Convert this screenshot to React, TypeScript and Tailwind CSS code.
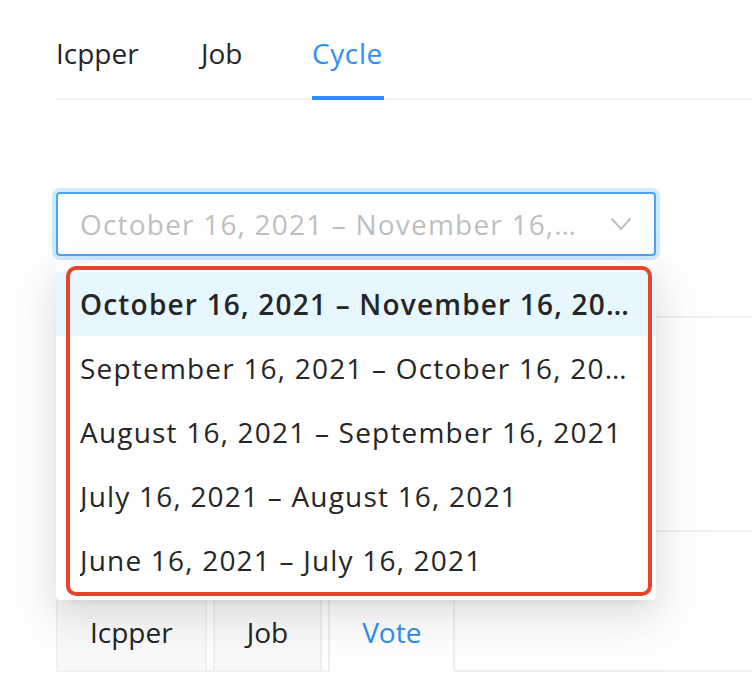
import React from 'react';

const cycles: string[] = [
  'October 16, 2021 – November 16, 2021',
  'September 16, 2021 – October 16, 2021',
  'August 16, 2021 – September 16, 2021',
  'July 16, 2021 – August 16, 2021',
  'June 16, 2021 – July 16, 2021',
];

const topTabs = [
  { name: 'Icpper', cls: 'w-[83px]' },
  { name: 'Job', cls: 'w-[46px] ml-[62px]' },
  { name: 'Cycle', cls: 'w-[72px] ml-[65px] text-[#2f8ef3] tracking-[0.6px]' },
];

const App: React.FC = () => {
  return (
    <div className="relative w-[752px] h-[674px] overflow-hidden bg-white text-[#262626] font-['Open_Sans',sans-serif]">
      <div className="pl-[56px]">
        {/* top tabs */}
        <div className="flex pt-[7px] border-b-2 border-[#f0f0f0]">
          {topTabs.map((t) => (
            <div
              key={t.name}
              className={`relative pt-[24px] pb-[23px] text-[28px] leading-[44px] whitespace-nowrap ${t.cls}`}
            >
              {t.name}
              {t.name === 'Cycle' && (
                <div className="absolute left-0 right-0 bottom-[-2px] h-[4px] bg-[#2f8ef3]" />
              )}
            </div>
          ))}
        </div>

        {/* select */}
        <div className="mt-[92px] w-[600px] h-[64px] rounded-[4px] border-2 border-[#4aa3fb] shadow-[0_0_0_4px_rgba(24,144,255,0.2)] flex items-center pl-[22px] pr-[22px]">
          <span className="flex-1 truncate pr-[30px] text-[28px] leading-[44px] tracking-[1.2px] text-[#bfbfbf]">
            {cycles[0]}
          </span>
          <svg width="22" height="14" viewBox="0 0 22 14" className="shrink-0">
            <polyline points="1.5,1.5 11,12 20.5,1.5" fill="none" stroke="#bfbfbf" strokeWidth="2" />
          </svg>
        </div>

        {/* card body behind dropdown */}
        <div className="mt-[60px] h-[216px] border-y-2 border-[#f0f0f0]" />

        {/* card tabs */}
        <div className="mt-[60px] flex gap-[6px] border-b-2 border-[#f0f0f0]">
          {['Icpper', 'Job', 'Vote'].map((t) => (
            <div
              key={t}
              className={`-mb-[2px] px-[32px] py-[16px] text-[28px] leading-[44px] border-2 rounded-t-[4px] border-[#f0f0f0] ${
                t === 'Vote' ? 'bg-white border-b-white text-[#2f8ef3]' : 'bg-[#fafafa]'
              }`}
            >
              {t}
            </div>
          ))}
        </div>
      </div>

      {/* dropdown overlay */}
      <div className="absolute left-[56px] top-[264px] w-[600px] py-[8px] bg-white rounded-[4px] shadow-[0_6px_12px_-8px_rgba(0,0,0,0.12),0_12px_32px_0_rgba(0,0,0,0.08),0_18px_56px_16px_rgba(0,0,0,0.05)]">
        {cycles.map((c, i) => (
          <div
            key={c}
            className={`h-[64px] px-[24px] flex items-center text-[28px] leading-[44px] tracking-[1.2px] ${
              i === 0 ? 'bg-[#e6f7ff] font-semibold' : ''
            }`}
          >
            <span className="truncate">{c}</span>
          </div>
        ))}
        <div className="absolute left-[10px] top-[2px] w-[586px] h-[330px] border-[4px] border-[#e8432b] rounded-[10px]" />
      </div>
    </div>
  );
};

export default App;
